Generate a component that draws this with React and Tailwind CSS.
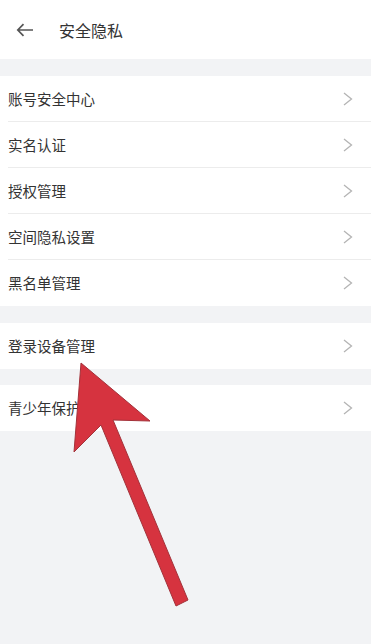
import React from "react";

const Chevron = () => (
  <svg width="10" height="14" viewBox="0 0 10 14" className="shrink-0">
    <polyline points="1,1 8.5,7 1,13" fill="none" stroke="#b4b4b4" strokeWidth="1.3" strokeLinejoin="miter" />
  </svg>
);

const Row = ({ label, last }) => (
  <div className={`flex items-center justify-between h-[46px] ml-2 pr-[18px] ${last ? "" : "border-b border-[#ececec]"}`}>
    <span className="text-[14.5px] text-[#333]">{label}</span>
    <Chevron />
  </div>
);

export default function App() {
  return (
    <div
      className="relative w-[377px] h-[644px] bg-white overflow-hidden"
      style={{ fontFamily: '"Noto Sans CJK SC", "Noto Sans", sans-serif' }}
    >
      <div className="w-[371px] h-full bg-[#f2f3f5] flex flex-col">
        <div className="h-[59px] bg-white flex items-center">
          <svg width="18" height="14" viewBox="0 0 18 14" className="ml-[16px]">
            <path d="M17 7H2M7.5 1.2L1.8 7l5.7 5.8" fill="none" stroke="#555" strokeWidth="1.7" />
          </svg>
          <span className="ml-[25px] text-[16px] text-[#333]">安全隐私</span>
        </div>
        <div className="h-[17px]" />
        <div className="bg-white">
          <Row label="账号安全中心" />
          <Row label="实名认证" />
          <Row label="授权管理" />
          <Row label="空间隐私设置" />
          <Row label="黑名单管理" last />
        </div>
        <div className="h-[17px]" />
        <div className="bg-white">
          <Row label="登录设备管理" last />
        </div>
        <div className="h-[16px]" />
        <div className="bg-white">
          <Row label="青少年保护" last />
        </div>
      </div>
      <svg className="absolute inset-0 pointer-events-none" width="377" height="644" viewBox="0 0 377 644">
        <polygon
          points="81,363 150,421 113,420 188,600 176,606 101,425 74,452"
          fill="#d6333f"
          stroke="#a3323a"
          strokeWidth="1"
          strokeLinejoin="round"
        />
      </svg>
    </div>
  );
}
